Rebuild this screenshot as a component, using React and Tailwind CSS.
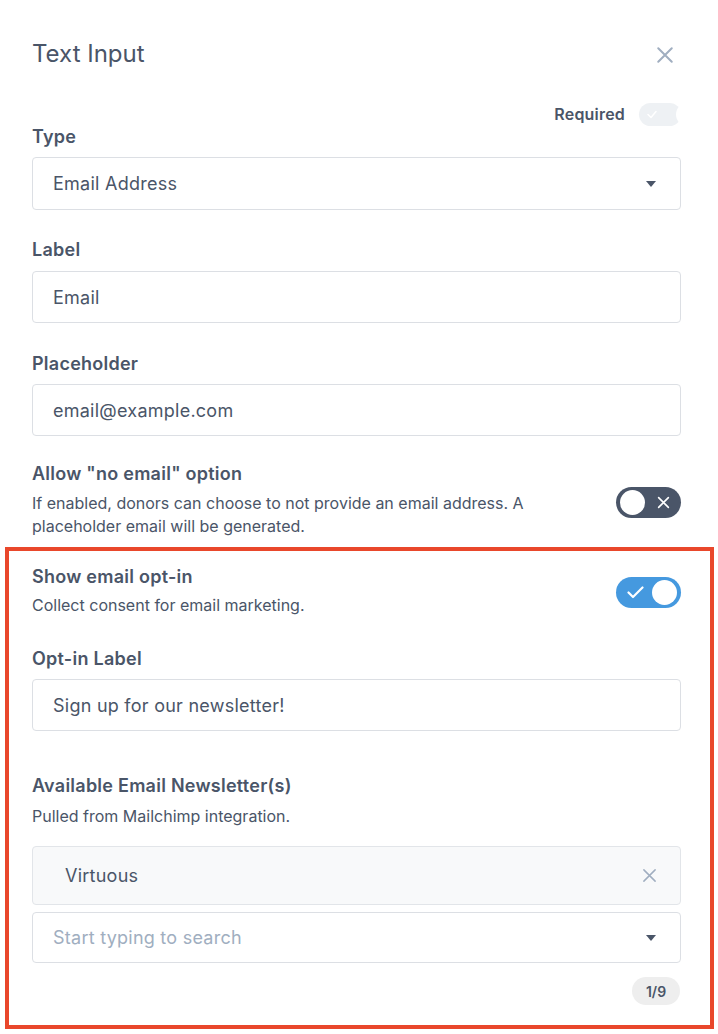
import React from "react";

function Caret() {
  return (
    <svg width="10" height="6" viewBox="0 0 10 6" className="shrink-0">
      <path d="M0 0 L10 0 L5 6 Z" fill="#4a5568" />
    </svg>
  );
}

function XIcon({ size = 16, stroke = "#a0aec0", width = 2 }) {
  return (
    <svg width={size} height={size} viewBox="0 0 16 16">
      <path d="M2 2 L14 14 M14 2 L2 14" stroke={stroke} strokeWidth={width} strokeLinecap="round" fill="none" />
    </svg>
  );
}

function Label({ children, className = "" }) {
  return (
    <div className={"text-[18px] leading-6 font-semibold tracking-[0.25px] text-[#4a5568] " + className}>{children}</div>
  );
}

function Field({ children, className = "", placeholder = false }) {
  return (
    <div
      className={
        "flex items-center border border-[#dcdfe4] rounded-[4px] pl-5 text-[18px] tracking-[0.25px] " +
        (placeholder ? "text-[#a0aec0] " : "text-[#4a5568] ") +
        className
      }
    >
      {children}
    </div>
  );
}

export default function App() {
  return (
    <div
      className="w-[718px] min-h-[1034px] bg-white pl-8 pr-[37px] pt-[38px] overflow-hidden"
      style={{ fontFamily: "Inter, 'Noto Sans', sans-serif" }}
    >
      {/* Header */}
      <div className="flex items-center justify-between h-8">
        <div className="text-[24px] leading-8 text-[#4a5568]">Text Input</div>
        <div className="mr-[7px] mt-[2px]">
          <XIcon size={18} width={1.8} />
        </div>
      </div>

      {/* Required */}
      <div className="flex items-center justify-end gap-[14px] h-6 mt-8">
        <span className="text-[16px] font-semibold tracking-[0.2px] text-[#4a5568]">Required</span>
        <div className="relative w-[42px] h-[23px] rounded-full bg-[#eef1f4]">
          <svg className="absolute left-[8px] top-[7px]" width="10" height="9" viewBox="0 0 10 9">
            <path d="M1 4.5 L4 7.5 L9 1.5" stroke="#ffffff" strokeWidth="1.5" fill="none" strokeLinecap="round" strokeLinejoin="round" />
          </svg>
          <div className="absolute left-[37px] top-0 w-[23px] h-[23px] rounded-full bg-white" />
        </div>
      </div>

      {/* Type */}
      <Label className="-mt-px">Type</Label>
      <Field className="mt-2 h-[53px] justify-between pr-6">
        <span>Email Address</span>
        <Caret />
      </Field>

      <Label className="mt-7">Label</Label>
      <Field className="mt-[9px] h-[52px]">Email</Field>

      <Label className="mt-[29px]">Placeholder</Label>
      <Field className="mt-2 h-[52px]">email@example.com</Field>

      {/* Allow no email */}
      <div className="flex items-start justify-between mt-[26px]">
        <div>
          <Label>Allow "no email" option</Label>
          <div className="mt-[6px] text-[16px] leading-[23px] text-[#4a5568] max-w-[500px]">
            If enabled, donors can choose to not provide an email address. A placeholder email will be generated.
          </div>
        </div>
        <div className="relative mt-[25px] w-[65px] h-[31px] rounded-full bg-[#4a5568] shrink-0">
          <div className="absolute left-[4px] top-[3px] w-[25px] h-[25px] rounded-full bg-white" />
          <div className="absolute right-[11px] top-[9px]">
            <XIcon size={13} stroke="#ffffff" width={2} />
          </div>
        </div>
      </div>

      {/* Highlighted section */}
      <div className="mt-[9px] -ml-[27px] -mr-[33px] border-4 border-[#e9472b] pl-[23px] pr-[29px] pt-[14px] pb-[20px]">
        <div className="flex items-start justify-between">
          <div>
            <Label>Show email opt-in</Label>
            <div className="mt-[5px] text-[16px] leading-[23px] text-[#4a5568]">
              Collect consent for email marketing.
            </div>
          </div>
          <div className="relative mt-[12px] w-[65px] h-[31px] rounded-full bg-[#4599df] shrink-0">
            <svg className="absolute left-[11px] top-[9px]" width="17" height="13" viewBox="0 0 17 13">
              <path d="M1.5 6.5 L6 11 L15.5 1.5" stroke="#ffffff" strokeWidth="2.2" fill="none" strokeLinecap="round" strokeLinejoin="round" />
            </svg>
            <div className="absolute right-[4px] top-[3px] w-[25px] h-[25px] rounded-full bg-white" />
          </div>
        </div>

        <Label className="mt-[30px]">Opt-in Label</Label>
        <Field className="mt-2 h-[52px]">Sign up for our newsletter!</Field>

        <Label className="mt-[43px]">Available Email Newsletter(s)</Label>
        <div className="mt-[7px] text-[16px] leading-[23px] text-[#4a5568]">
          Pulled from Mailchimp integration.
        </div>

        <div className="mt-[18px] h-[59px] flex items-center justify-between bg-[#f8f9fa] border border-[#e2e5e9] rounded-[4px] pl-8 pr-[23px] text-[18px] tracking-[0.25px] text-[#4a5568]">
          <span>Virtuous</span>
          <XIcon size={15} width={1.6} />
        </div>

        <Field placeholder className="mt-[7px] h-[51px] justify-between pr-6">
          <span>Start typing to search</span>
          <Caret />
        </Field>

        <div className="flex justify-end mt-[14px]">
          <div className="h-[28px] w-[48px] mr-px rounded-full bg-[#eeeeee] flex items-center justify-center text-[14px] font-semibold text-[#4a5568]">
            1/9
          </div>
        </div>
      </div>
    </div>
  );
}
